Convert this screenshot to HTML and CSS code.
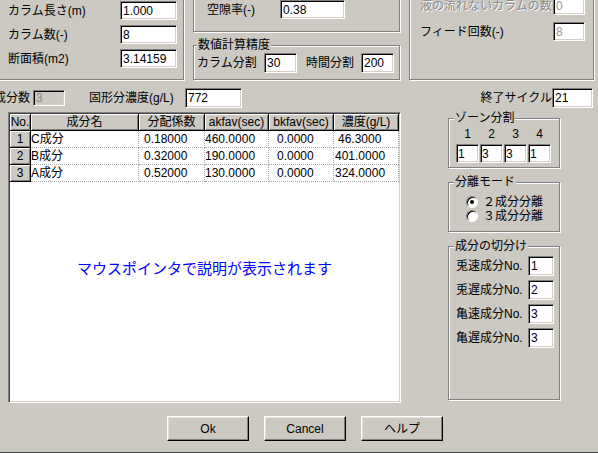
FILE: index.html
```html
<!DOCTYPE html>
<html lang="ja">
<head>
<meta charset="utf-8">
<title>カラム設定</title>
<link rel="stylesheet" href="styles.css">
</head>
<body>
<div class="dlg">
  <div class="top">
    <div class="grp g-col">
      <div class="row"><span class="lab">カラム長さ(m)</span><input class="tb" value="1.000" readonly></div>
      <div class="row"><span class="lab">カラム数(-)</span><input class="tb" value="8" readonly></div>
      <div class="row"><span class="lab">断面積(m2)</span><input class="tb" value="3.14159" readonly></div>
    </div>
    <div class="mid">
      <div class="grp g-void">
        <div class="row"><span class="lab">空隙率(-)</span><input class="tb" value="0.38" readonly></div>
      </div>
      <div class="grp g-prec">
        <span class="gt">数値計算精度</span>
        <div class="row row20"><span class="lab l1">カラム分割</span><input class="tb" value="30" readonly><span class="lab l2">時間分割</span><input class="tb" value="200" readonly></div>
      </div>
    </div>
    <div class="grp g-feed">
      <div class="row"><span class="lab dis">液の流れないカラムの数</span><input class="tb tdis" value="0" readonly></div>
      <div class="row"><span class="lab">フィード回数(-)</span><input class="tb tdis" value="8" readonly></div>
    </div>
  </div>

  <div class="r2">
    <span class="lab lab-n">成分数</span><input class="tb tgrey" value="3" readonly>
    <span class="lab lab-k">固形分濃度(g/L)</span><input class="tb tk" value="772" readonly>
    <span class="lab lab-e">終了サイクル</span><input class="tb te" value="21" readonly>
  </div>

  <div class="main">
    <div class="grid">
      <div class="tbl">
        <div class="hc">No.</div><div class="hc">成分名</div><div class="hc">分配係数</div><div class="hc">akfav(sec)</div><div class="hc">bkfav(sec)</div><div class="hc">濃度(g/L)</div>
        <div class="hc rh">1</div><div class="dc c1">C成分</div><div class="dc c2">0.18000</div><div class="dc c3">460.0000</div><div class="dc c4">0.0000</div><div class="dc c5 c5a">46.3000</div>
        <div class="hc rh">2</div><div class="dc c1">B成分</div><div class="dc c2">0.32000</div><div class="dc c3">190.0000</div><div class="dc c4">0.0000</div><div class="dc c5">401.0000</div>
        <div class="hc rh">3</div><div class="dc c1">A成分</div><div class="dc c2">0.52000</div><div class="dc c3">130.0000</div><div class="dc c4">0.0000</div><div class="dc c5">324.0000</div>
      </div>
      <div class="msg">マウスポインタで説明が表示されます</div>
    </div>

    <div class="side">
      <div class="grp g-zone">
        <span class="gt">ゾーン分割</span>
        <div class="znum"><span>1</span><span>2</span><span>3</span><span>4</span></div>
        <div class="zin"><input class="tb" value="1" readonly><input class="tb" value="3" readonly><input class="tb" value="3" readonly><input class="tb" value="1" readonly></div>
      </div>
      <div class="grp g-mode">
        <span class="gt">分離モード</span>
        <div class="rrow r-first"><span class="rb on"></span><span>２成分分離</span></div>
        <div class="rrow"><span class="rb"></span><span>３成分分離</span></div>
      </div>
      <div class="grp g-cut">
        <span class="gt">成分の切分け</span>
        <div class="crow c-first"><span class="lab">兎速成分No.</span><input class="tb" value="1" readonly></div>
        <div class="crow"><span class="lab">兎遅成分No.</span><input class="tb" value="2" readonly></div>
        <div class="crow"><span class="lab">亀速成分No.</span><input class="tb" value="3" readonly></div>
        <div class="crow"><span class="lab">亀遅成分No.</span><input class="tb" value="3" readonly></div>
      </div>
    </div>
  </div>

  <div class="btns">
    <button class="btn" type="button">Ok</button>
    <button class="btn" type="button">Cancel</button>
    <button class="btn" type="button">ヘルプ</button>
  </div>
</div>
</body>
</html>
```

FILE: styles.css
```css
* { box-sizing: border-box; }
html, body { margin: 0; padding: 0; }
body {
  background: #ccc8c2;
  font: 12px/14px "Liberation Sans", "Noto Sans CJK JP", sans-serif;
  color: #000;
}
.dlg {
  width: 598px;
  height: 453px;
  overflow: hidden;
  display: flex;
  flex-direction: column;
  border-bottom: 1px solid #404040;
  background: #ccc8c2;
}

/* generic controls */
.lab { white-space: nowrap; flex: none; }
.dis { color: #8a8a8a; text-shadow: 1px 1px 0 #fff; }
.tb {
  flex: none;
  height: 19px;
  margin: 0;
  padding: 0 2px;
  border: 1px solid;
  border-color: #808080 #fff #fff #808080;
  box-shadow: inset 1px 1px 0 #000, inset -1px -1px 0 #d4d0c8;
  background: #fff;
  color: #000;
  font: 12px/14px "Liberation Sans", "Noto Sans CJK JP", sans-serif;
  outline: none;
}
.tdis { color: #9a9a9a; }
.tgrey { background: #ccc8c2; color: #8a8a8a; }

.grp {
  flex: none;
  border: 1px solid #808080;
  box-shadow: inset 1px 1px 0 #fff, 1px 1px 0 #fff;
}
.gt {
  display: block;
  width: max-content;
  margin: -7px 0 0 5px;
  padding: 0 1px;
  background: #ccc8c2;
  line-height: 13px;
}
.row { display: flex; align-items: center; height: 19px; }
.row20 { height: 20px; }
.row20 .tb { height: 20px; }

/* top row */
.top {
  flex: none;
  display: flex;
  align-items: flex-start;
  margin-top: -20px;
  height: 100px;
}
.g-col {
  width: 194px;
  height: 100px;
  margin-left: -10px;
  padding: 20px 0 0 17px;
  display: flex;
  flex-direction: column;
  gap: 5px;
}
.g-col .lab { width: 112px; }
.g-col .tb { width: 57px; }

.mid {
  flex: none;
  margin-left: 9px;
  width: 207px;
  display: flex;
  flex-direction: column;
}
.g-void { height: 52px; padding: 19px 0 0 13px; }
.g-void .lab { width: 73px; }
.g-void .tb { width: 65px; }
.g-prec { margin-top: 13px; height: 35px; }
.g-prec .gt { margin-left: 3px; }
.g-prec .row { margin: 1px 0 0 3px; }
.g-prec .l1 { width: 67px; }
.g-prec .l2 { width: 55px; margin-left: 9px; }
.g-prec .tb { width: 33px; }

.g-feed {
  margin-left: 9px;
  width: 185px;
  height: 100px;
  padding: 15px 0 0 10px;
  display: flex;
  flex-direction: column;
  gap: 7px;
}
.g-feed .lab { width: 133px; overflow: hidden; }
.g-feed .tb { width: 32px; }

/* second row */
.r2 {
  flex: none;
  display: flex;
  align-items: center;
  height: 20px;
  margin-top: 8px;
}
.lab-n { margin-left: -6px; width: 39px; }
.tgrey { width: 32px; height: 16px; }
.lab-k { margin-left: 24px; width: 96px; }
.tk { width: 57px; height: 20px; }
.lab-e { margin-left: auto; }
.te { width: 41px; height: 20px; margin-right: 5px; }

/* main area */
.main {
  flex: none;
  display: flex;
  height: 291px;
  margin-top: 4px;
}
.grid {
  flex: none;
  margin-left: 8px;
  width: 393px;
  height: 291px;
  padding: 1px;
  border: 1px solid;
  border-color: #808080 #fff #fff #808080;
  box-shadow: inset 1px 1px 0 #404040, inset -1px -1px 0 #d4d0c8;
  background: #fff;
}
.tbl {
  display: grid;
  grid-template-columns: 21px 108px 66px 64px 65px 65px;
  grid-template-rows: 17px repeat(3, 17px);
}
.hc {
  background: #ccc8c2;
  border-right: 1px solid #000;
  border-bottom: 1px solid #000;
  box-shadow: inset 1px 1px 0 #fff, inset -1px -1px 0 #808080;
  text-align: center;
  line-height: 16px;
  white-space: nowrap;
  overflow: hidden;
}
.dc {
  border-right: 1px dotted #a8a8a8;
  border-bottom: 1px dotted #a8a8a8;
  line-height: 16px;
  white-space: nowrap;
  overflow: hidden;
}
.c1 { padding-left: 0; }
.c2 { padding-left: 5px; }
.c3 { padding-left: 0; }
.c4 { padding-left: 8px; }
.c5 { padding-left: 1px; }
.c5a { padding-left: 4px; }
.msg {
  margin-top: 78px;
  text-align: center;
  color: #0000ff;
  font-size: 15px;
  line-height: 18px;
}

/* right column */
.side {
  flex: none;
  margin-left: 47px;
  width: 112px;
  display: flex;
  flex-direction: column;
}
.g-zone { margin-top: 6px; height: 50px; }
.g-zone .gt { margin-left: 5px; }
.znum { display: flex; gap: 1px; margin: 3px 0 0 7px; line-height: 12px; }
.znum span { width: 23px; text-align: center; }
.zin { display: flex; gap: 1px; margin: 4px 0 0 7px; }
.zin .tb { width: 23px; padding: 0 1px; }

.g-mode { margin-top: 14px; height: 50px; }
.rrow { display: flex; align-items: center; gap: 5px; height: 14px; margin-left: 17px; }
.r-first { margin-top: 6px; }
.rb {
  flex: none;
  width: 12px;
  height: 12px;
  border-radius: 50%;
  border: 1px solid;
  border-color: #808080 #fff #fff #808080;
  box-shadow: inset 1px 1px 0 #000;
  background: #fff;
  display: flex;
  align-items: center;
  justify-content: center;
}
.rb.on::after {
  content: "";
  width: 4px;
  height: 4px;
  border-radius: 50%;
  background: #000;
}

.g-cut {
  margin-top: 14px;
  height: 154px;
  display: flex;
  flex-direction: column;
}
.crow { display: flex; align-items: center; height: 20px; margin: 4px 0 0 7px; }
.crow.c-first { margin-top: 3px; }
.crow .lab { width: 72px; }
.crow .tb { width: 26px; height: 20px; }

/* buttons */
.btns {
  flex: none;
  display: flex;
  gap: 15px;
  margin: 13px 0 0 167px;
}
.btn {
  width: 82px;
  height: 25px;
  padding: 0;
  border: 1px solid;
  border-color: #fff #000 #000 #fff;
  box-shadow: inset -1px -1px 0 #808080, inset 1px 1px 0 #e4e0da;
  background: #ccc8c2;
  color: #000;
  font: 12px/14px "Liberation Sans", "Noto Sans CJK JP", sans-serif;
}
```
